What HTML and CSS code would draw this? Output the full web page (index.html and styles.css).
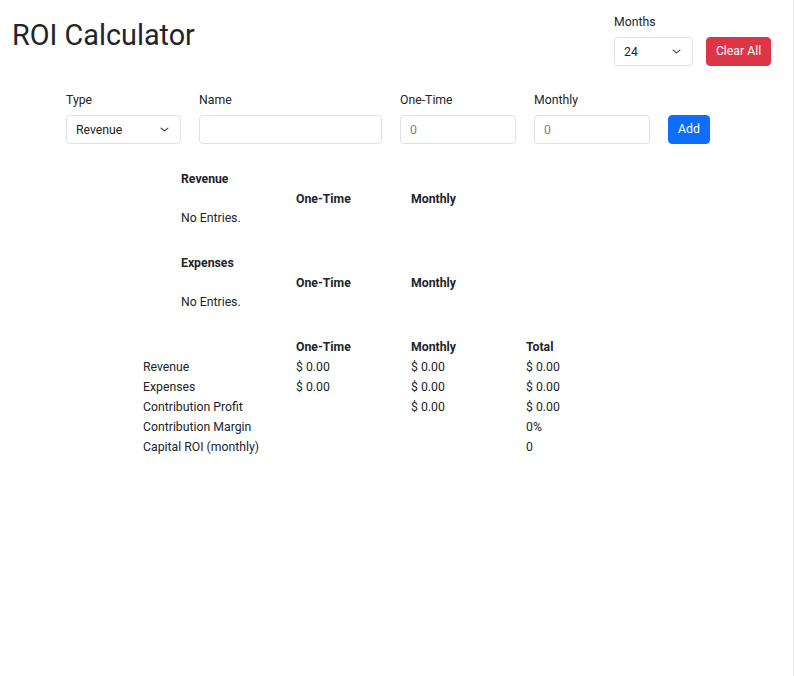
FILE: index.html
```html
<!DOCTYPE html>
<html lang="en">
<head>
<meta charset="utf-8">
<title>ROI Calculator</title>
<link rel="stylesheet" href="styles.css">
</head>
<body>
<div class="page">
  <header class="top">
    <h1 class="title">ROI Calculator</h1>
    <div class="controls">
      <div class="field">
        <label class="label">Months</label>
        <select class="select months"><option>24</option></select>
      </div>
      <button class="btn btn-danger" type="button">Clear All</button>
    </div>
  </header>

  <form class="entry">
    <div class="field">
      <label class="label">Type</label>
      <select class="select type"><option>Revenue</option></select>
    </div>
    <div class="field">
      <label class="label">Name</label>
      <input class="input name" type="text">
    </div>
    <div class="field">
      <label class="label">One-Time</label>
      <input class="input num" type="text" placeholder="0">
    </div>
    <div class="field">
      <label class="label">Monthly</label>
      <input class="input num" type="text" placeholder="0">
    </div>
    <button class="btn btn-primary" type="button">Add</button>
  </form>

  <section class="list">
    <div class="list-title">Revenue</div>
    <div class="list-head"><span></span><span>One-Time</span><span>Monthly</span></div>
    <div class="empty">No Entries.</div>
  </section>

  <section class="list">
    <div class="list-title">Expenses</div>
    <div class="list-head"><span></span><span>One-Time</span><span>Monthly</span></div>
    <div class="empty">No Entries.</div>
  </section>

  <section class="summary">
    <div class="sum-row sum-head"><span></span><span>One-Time</span><span>Monthly</span><span>Total</span></div>
    <div class="sum-row"><span>Revenue</span><span>$ 0.00</span><span>$ 0.00</span><span>$ 0.00</span></div>
    <div class="sum-row"><span>Expenses</span><span>$ 0.00</span><span>$ 0.00</span><span>$ 0.00</span></div>
    <div class="sum-row"><span>Contribution Profit</span><span></span><span>$ 0.00</span><span>$ 0.00</span></div>
    <div class="sum-row"><span>Contribution Margin</span><span></span><span></span><span>0%</span></div>
    <div class="sum-row"><span>Capital ROI (monthly)</span><span></span><span></span><span>0</span></div>
  </section>
</div>
</body>
</html>
```

FILE: styles.css
```css
* { box-sizing: border-box; }

html, body {
  margin: 0;
  padding: 0;
  background: #fff;
}

body {
  font-family: Roboto, "Liberation Sans", Arial, sans-serif;
  font-size: 12.25px;
  color: #212529;
}

.page {
  width: 794px;
  min-height: 676px;
  border-right: 1px solid #ececec;
}

.top {
  display: flex;
  justify-content: space-between;
  align-items: flex-start;
  padding: 13px 22px 0 12px;
}

.title {
  margin: 5px 0 0;
  font-size: 28.8px;
  font-weight: 400;
  line-height: 1.2;
}

.controls {
  display: flex;
  align-items: flex-end;
  gap: 13px;
}

.field {
  display: flex;
  flex-direction: column;
}

.label {
  line-height: 18px;
  margin-bottom: 6px;
}

.select,
.input {
  height: 29px;
  border: 1px solid #dee2e6;
  border-radius: 4px;
  background-color: #fff;
  font-family: inherit;
  font-size: 12.25px;
  color: #212529;
  padding: 0 9px;
  margin: 0;
  outline: none;
}

.select {
  appearance: none;
  -webkit-appearance: none;
  background-image: url("data:image/svg+xml,%3csvg xmlns='http://www.w3.org/2000/svg' viewBox='0 0 16 16'%3e%3cpath fill='none' stroke='%23343a40' stroke-linecap='round' stroke-linejoin='round' stroke-width='1.6' d='m3 6 5 4 5-4'/%3e%3c/svg%3e");
  background-repeat: no-repeat;
  background-position: right 10px center;
  background-size: 11px 11px;
}

.months { width: 79px; }
.type { width: 115px; }
.name { width: 183px; }
.num { width: 116px; }

.input::placeholder { color: #7b8288; }

.btn {
  height: 29px;
  border: 1px solid transparent;
  border-radius: 4px;
  font-family: inherit;
  font-size: 12.25px;
  color: #fff;
  padding: 0;
  line-height: 1;
  white-space: nowrap;
}

.btn-danger {
  background: #dc3545;
  border-color: #dc3545;
  width: 65px;
}

.btn-primary {
  background: #0d6efd;
  border-color: #0d6efd;
  width: 42px;
}

.entry {
  display: flex;
  align-items: flex-end;
  gap: 18px;
  margin: 25px 0 0 66px;
}

.list {
  margin: 25px 0 0 181px;
}

.list + .list { margin-top: 25px; }

.list-title {
  font-weight: 700;
  line-height: 20px;
}

.list-head {
  display: grid;
  grid-template-columns: 115px 115px 115px;
  font-weight: 700;
  line-height: 20px;
}

.empty {
  line-height: 19px;
}

.summary {
  margin: 25px 0 0 143px;
}

.sum-row {
  display: grid;
  grid-template-columns: 153px 115px 115px 115px;
  line-height: 20px;
}

.sum-head { font-weight: 700; }
```
